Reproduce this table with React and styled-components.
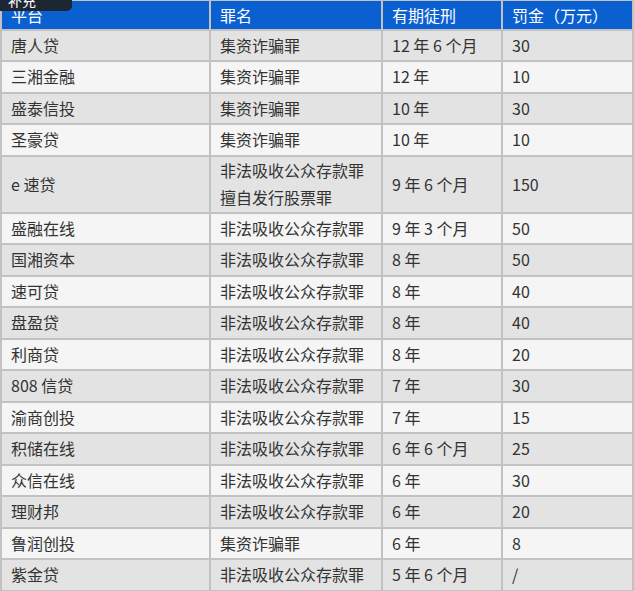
import React from "react";
import styled, { createGlobalStyle } from "styled-components";

const GlobalStyle = createGlobalStyle`
  html, body {
    margin: 0;
    padding: 0;
    background: #ffffff;
  }
  body {
    font-family: "Noto Sans CJK SC", "Liberation Sans", sans-serif;
  }
`;

const Page = styled.div`
  position: relative;
  width: 634px;
  height: 591px;
  overflow: hidden;
  background: #ffffff;
`;

// dark label cut off at the top edge
const TopTab = styled.div`
  position: absolute;
  left: 0;
  top: 0;
  width: 72px;
  height: 11px;
  background: #1d2733;
  border-radius: 0 0 5px 0;
  overflow: hidden;
  color: #ffffff;
  font-size: 14px;
  line-height: 14px;
  padding-left: 8px;
  box-sizing: border-box;
  z-index: 2;
`;

const TabText = styled.span`
  display: block;
  margin-top: -7px;
`;

const Table = styled.table`
  width: 632px;
  border-collapse: collapse;
  table-layout: fixed;
  font-size: 16px;
  color: #333333;
  border-right: 2px solid #c2c2c2;
`;

const HeadRow = styled.tr`
  height: 29px;
  background: #0b60d1;
`;

const HeadCell = styled.th`
  text-align: left;
  font-weight: normal;
  color: #ffffff;
  padding: 0 9px;
  border: 2px solid #c2c2c2;
  border-top: 1px solid #c2c2c2;
  border-bottom: 0;
  line-height: 26px;
`;

const Row = styled.tr`
  height: ${(p) => (p.$tall ? "57px" : "31.5px")};
  background: ${(p) => (p.$shade ? "#e3e3e3" : "#f5f5f5")};
`;

const Cell = styled.td`
  padding: 0 9px;
  border: 2px solid #c2c2c2;
  vertical-align: middle;
  line-height: 27px;
  white-space: nowrap;
`;

const rows = [
  ["唐人贷", ["集资诈骗罪"], "12 年 6 个月", "30"],
  ["三湘金融", ["集资诈骗罪"], "12 年", "10"],
  ["盛泰信投", ["集资诈骗罪"], "10 年", "30"],
  ["圣豪贷", ["集资诈骗罪"], "10 年", "10"],
  ["e 速贷", ["非法吸收公众存款罪", "擅自发行股票罪"], "9 年 6 个月", "150"],
  ["盛融在线", ["非法吸收公众存款罪"], "9 年 3 个月", "50"],
  ["国湘资本", ["非法吸收公众存款罪"], "8 年", "50"],
  ["速可贷", ["非法吸收公众存款罪"], "8 年", "40"],
  ["盘盈贷", ["非法吸收公众存款罪"], "8 年", "40"],
  ["利商贷", ["非法吸收公众存款罪"], "8 年", "20"],
  ["808 信贷", ["非法吸收公众存款罪"], "7 年", "30"],
  ["渝商创投", ["非法吸收公众存款罪"], "7 年", "15"],
  ["积储在线", ["非法吸收公众存款罪"], "6 年 6 个月", "25"],
  ["众信在线", ["非法吸收公众存款罪"], "6 年", "30"],
  ["理财邦", ["非法吸收公众存款罪"], "6 年", "20"],
  ["鲁润创投", ["集资诈骗罪"], "6 年", "8"],
  ["紫金贷", ["非法吸收公众存款罪"], "5 年 6 个月", "/"],
];

const App = () => {
  return (
    <Page>
      <GlobalStyle />
      <TopTab>
        <TabText>补充</TabText>
      </TopTab>
      <Table>
        <colgroup>
          <col style={{ width: 209 }} />
          <col style={{ width: 172 }} />
          <col style={{ width: 120 }} />
          <col style={{ width: 131 }} />
        </colgroup>
        <thead>
          <HeadRow>
            <HeadCell>平台</HeadCell>
            <HeadCell>罪名</HeadCell>
            <HeadCell>有期徒刑</HeadCell>
            <HeadCell>罚金（万元）</HeadCell>
          </HeadRow>
        </thead>
        <tbody>
          {rows.map((r, i) => (
            <Row key={r[0]} $shade={i % 2 === 0} $tall={r[1].length > 1}>
              <Cell>{r[0]}</Cell>
              <Cell>
                {r[1].map((c) => (
                  <div key={c}>{c}</div>
                ))}
              </Cell>
              <Cell>{r[2]}</Cell>
              <Cell>{r[3]}</Cell>
            </Row>
          ))}
        </tbody>
      </Table>
    </Page>
  );
};

export default App;
